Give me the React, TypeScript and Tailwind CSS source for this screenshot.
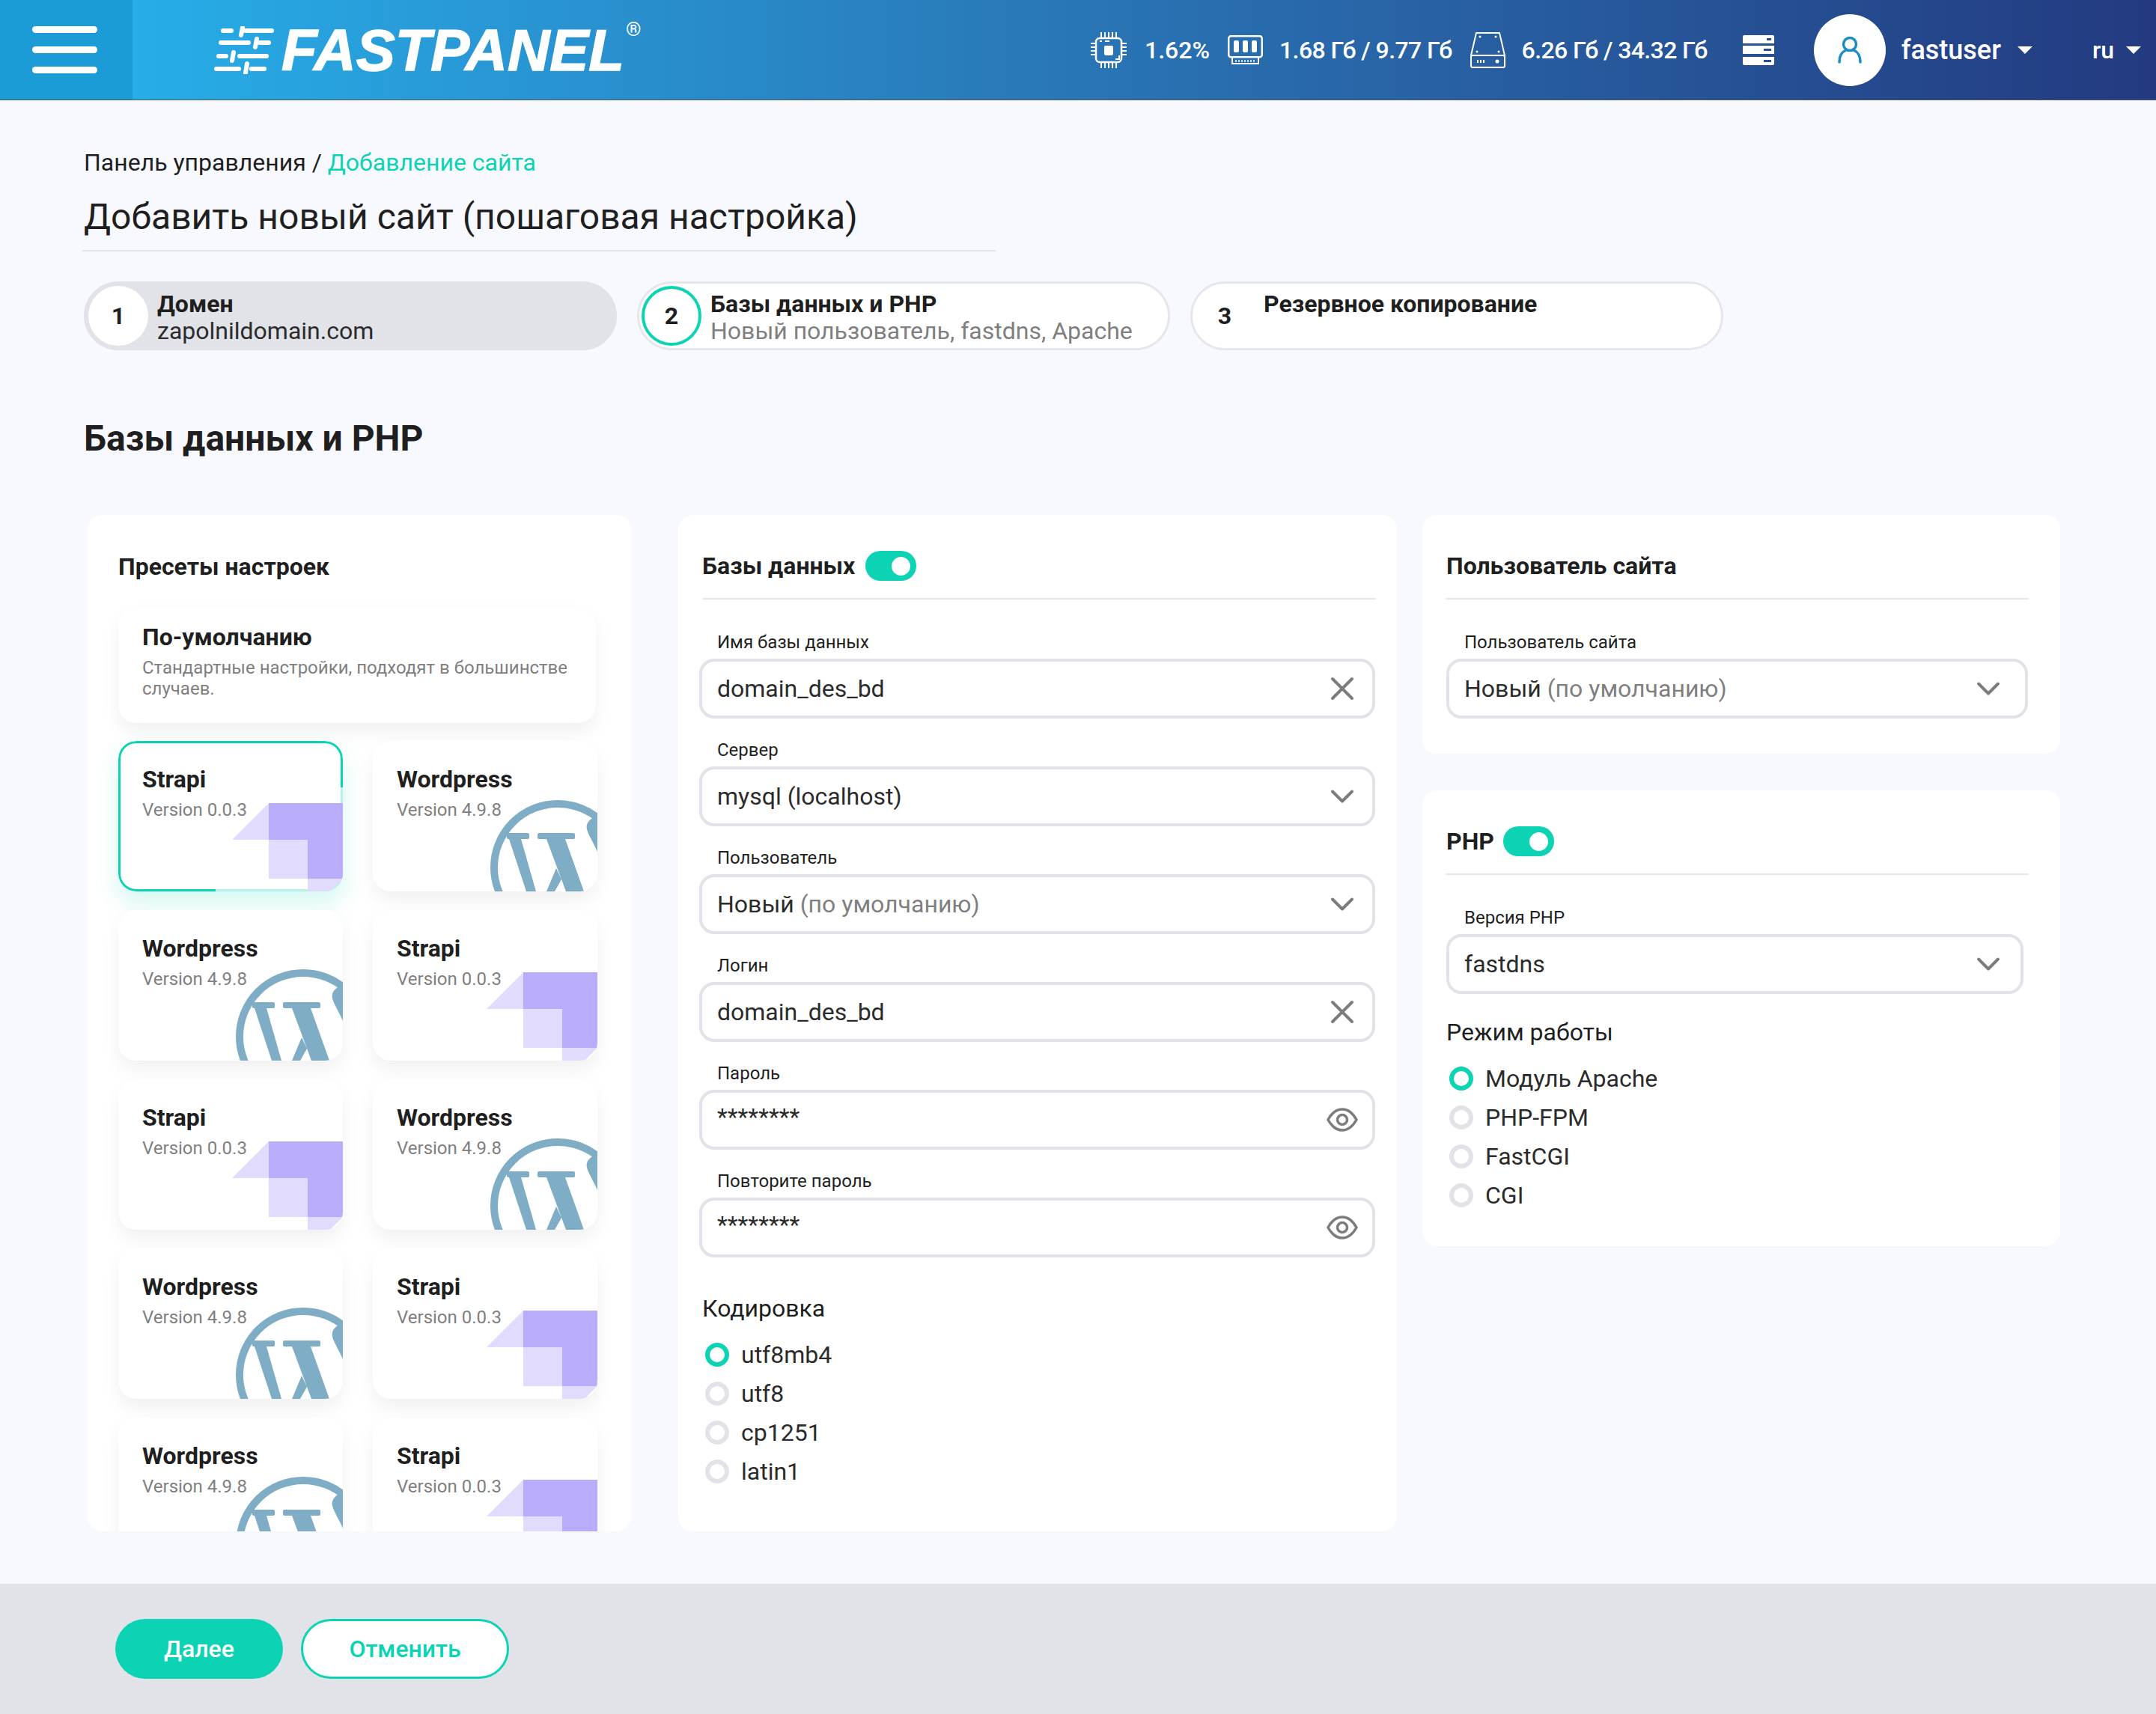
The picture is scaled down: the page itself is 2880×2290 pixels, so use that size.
import React from 'react';
import { ChevronDown, X } from 'lucide-react';

const rows = [
  ['strapi', 'wordpress'],
  ['wordpress', 'strapi'],
  ['strapi', 'wordpress'],
  ['wordpress', 'strapi'],
  ['wordpress', 'strapi'],
];

const LogoMark = () => (
  <svg width="80" height="64" viewBox="0 0 80 64" fill="none" stroke="white" strokeWidth="6" strokeLinecap="round">
    <path d="M12 6h11M42 6h35M38 2l-2 10" />
    <path d="M9 22h37M61 22h12M57 17l-2 11" />
    <path d="M6 40h10M34 40h36M26 35l-2 11" />
    <path d="M3 57h30M50 57h17M44 50l-2 12" />
  </svg>
);

const CpuIcon = () => (
  <svg width="48" height="48" viewBox="0 0 48 48" fill="none" stroke="white" strokeWidth="2">
    <rect x="7" y="8" width="34" height="32" rx="5" strokeWidth="2.5" />
    <rect x="18" y="18" width="12" height="13" rx="2" fill="white" stroke="none" />
    <path d="M12 12h3M19 12h6M33 36h5v-5" />
    <path d="M14 0v7M19 0v7M24 0v7M29 0v7M34 0v7M14 41v7M19 41v7M24 41v7M29 41v7M34 41v7M0 15h6M0 20h6M0 25h6M0 30h6M42 15h6M42 20h6M42 25h6M42 30h6" />
  </svg>
);

const RamIcon = () => (
  <svg width="47" height="39" viewBox="0 0 47 39" fill="none" stroke="white">
    <rect x="1.25" y="1.25" width="44.5" height="28" rx="3" strokeWidth="2.5" />
    <rect x="8" y="7" width="7" height="16" rx="2" fill="white" stroke="none" />
    <rect x="20" y="7" width="7" height="16" rx="2" fill="white" stroke="none" />
    <rect x="32" y="7" width="7" height="16" rx="2" fill="white" stroke="none" />
    <path d="M6 30v8h35v-8" strokeWidth="2" />
    <path d="M11 33v3M15 33v3M19 33v3M23 33v3M27 33v3M31 33v3M35 33v3" strokeWidth="1.5" />
  </svg>
);

const DiskIcon = () => (
  <svg width="47" height="48" viewBox="0 0 47 48" fill="none" stroke="white" strokeWidth="2">
    <path d="M8 1h31l7 30H1z" />
    <rect x="1" y="31" width="45" height="16" rx="2" />
    <path d="M9 39h12" strokeDasharray="2 2" strokeWidth="4" />
    <circle cx="36" cy="39" r="2.5" fill="white" stroke="none" />
    <circle cx="13" cy="6" r="1.5" fill="white" stroke="none" />
    <circle cx="34" cy="6" r="1.5" fill="white" stroke="none" />
    <circle cx="9" cy="26" r="1.5" fill="white" stroke="none" />
    <circle cx="38" cy="26" r="1.5" fill="white" stroke="none" />
  </svg>
);

const ServerIcon = () => (
  <svg width="42" height="40" viewBox="0 0 42 40" fill="white">
    <path fillRule="evenodd" d="M2 0h38a2 2 0 0 1 2 2v9H0V2a2 2 0 0 1 2-2zm30 4v3h6V4zM0 14h42v11H0zm28 4v3h10v-3zM0 29h42v9a2 2 0 0 1-2 2H2a2 2 0 0 1-2-2zm28 4v3h10v-3z" />
  </svg>
);

const UserIcon = () => (
  <svg width="36" height="37" viewBox="0 0 36 37" fill="none" stroke="#1b8cc4" strokeWidth="3.5" strokeLinecap="round">
    <circle cx="18" cy="11" r="8.5" />
    <path d="M4 35c0-9 4-14 9-16M32 35c0-9-4-14-9-16" />
  </svg>
);

const EyeIcon = () => (
  <svg className="shrink-0" width="42" height="32" viewBox="0 0 42 32" fill="none" stroke="#7c7c7c" strokeWidth="3.5">
    <path d="M2 16C7 7 13 2 21 2s14 5 19 14c-5 9-11 14-19 14S7 25 2 16z" />
    <circle cx="21" cy="16" r="6.5" />
  </svg>
);

const Chevron = () => <ChevronDown className="shrink-0" size={52} strokeWidth={1.8} />;
const Cross = () => <X className="shrink-0" size={52} strokeWidth={1.8} />;

const Caret = () => <div className="w-0 h-0 border-x-[10px] border-x-transparent border-t-[10px] border-t-white" />;

const Toggle = () => (
  <div className="w-[68px] h-[40px] rounded-full bg-[#0bd3b3] flex items-center justify-end pr-[8px]">
    <div className="w-[25px] h-[25px] rounded-full bg-white" />
  </div>
);

const Radio = ({ label, checked }: { label: string; checked?: boolean }) => (
  <div className="flex items-center h-[52px] gap-[16px]">
    <div className={`w-[32px] h-[32px] rounded-full border-[6px] bg-white ${checked ? 'border-[#0bd3b3]' : 'border-[#e2e3e8]'}`} />
    <span className="text-[32px] text-[#2b2b2b]">{label}</span>
  </div>
);

const Field = ({ label, children, icon, className = 'w-[903px] pr-[20px]' }: { label: string; children: React.ReactNode; icon: React.ReactNode; className?: string }) => (
  <div>
    <div className="h-[28px] leading-[28px] text-[24px] text-[#1f1f1f] pl-[24px]">{label}</div>
    <div className={`mt-[8px] h-[80px] rounded-[20px] border-[4px] border-[#e2e3e8] bg-white flex items-center justify-between pl-[20px] text-[32px] text-[#2b2b2b] ${className}`}>
      <div>{children}</div>
      <div className="w-[40px] flex justify-center text-[#7c7c7c]">{icon}</div>
    </div>
  </div>
);

const WpLogo = () => (
  <svg className="absolute inset-0" width="300" height="201" viewBox="0 0 300 201" fill="#7eadc5">
    <circle cx="247" cy="169" r="85" fill="none" stroke="#7eadc5" strokeWidth="10" />
    <rect x="179" y="123" width="30" height="8" rx="2" />
    <rect x="220" y="123" width="50" height="8" rx="2" />
    <path d="M182 131h16l20 70h-13zM232 131h25l25 70h-24zM245 170l7 15-9 16h-11z" />
    <path d="M300 100c-10 3-16 10-14 18 2 8 10 20 14 30z" />
  </svg>
);

const StrapiLogo = () => (
  <svg className="absolute inset-0" width="300" height="201" viewBox="0 0 300 201">
    <path d="M201 83h99v101h-47v-52h-52z" fill="#b9adfb" />
    <path d="M201 83l-49 49h49zM201 132h52v52h-52zM253 184h47l-17 17h-30z" fill="#e1dcfe" />
  </svg>
);

const PresetCard = ({ kind, selected }: { kind: string; selected?: boolean }) => {
  const strapi = kind === 'strapi';
  return (
    <div className={`relative h-[201px] rounded-[24px] bg-white overflow-hidden ${selected ? 'shadow-[0_16px_32px_rgba(11,211,179,0.18)]' : 'shadow-[0_12px_24px_rgba(0,0,0,0.06)]'}`}>
      {selected && <div className="absolute inset-0 rounded-[24px] border-[3px] border-[#0bd3b3]" />}
      <div className="absolute left-[130px] top-[62px] right-0 bottom-0 bg-white/70" />
      {strapi ? <StrapiLogo /> : <WpLogo />}
      <div className="absolute left-[32px] top-[31px] text-[32px] leading-[40px] font-bold text-[#1f1f1f]">{strapi ? 'Strapi' : 'Wordpress'}</div>
      <div className="absolute left-[32px] top-[77px] text-[24px] leading-[30px] text-[#7f7f7f]">{strapi ? 'Version 0.0.3' : 'Version 4.9.8'}</div>
    </div>
  );
};

const Step = ({ n, title, sub, state }: { n: number; title: string; sub?: string; state: 'done' | 'active' | 'next' }) => (
  <div className={`w-[712px] h-[92px] rounded-full border-[3px] flex items-center pl-[3px] gap-[12px] ${state === 'done' ? 'bg-[#e2e3e8] border-[#e2e3e8]' : 'bg-white border-[#e6e7ec]'}`}>
    <div className={`w-[80px] h-[80px] shrink-0 rounded-full bg-white flex items-center justify-center text-[32px] font-bold text-[#1f1f1f] ${state === 'active' ? 'border-[4px] border-[#0bd3b3]' : ''}`}>{n}</div>
    <div className="self-start pt-[9px] leading-[36px] text-[32px]">
      <div className="font-bold text-[#1f1f1f]">{title}</div>
      {sub && <div className={state === 'done' ? 'text-[#2b2b2b]' : 'text-[#7f7f7f]'}>{sub}</div>}
    </div>
  </div>
);

export default function App() {
  return (
    <div className="min-h-screen w-[2880px] bg-[#f8f9fe] flex flex-col [font-family:Roboto,sans-serif]">
      {/* Шапка */}
      <header className="h-[134px] shrink-0 flex items-center border-b border-[#4d5566] bg-gradient-to-r from-[#25b5ef] to-[#233a80] text-white">
        <div className="w-[177px] h-full bg-[#1b9cd6] flex flex-col justify-center gap-[18px] pl-[43px]">
          <div className="w-[87px] h-[9px] rounded-full bg-white" />
          <div className="w-[87px] h-[9px] rounded-full bg-white" />
          <div className="w-[87px] h-[9px] rounded-full bg-white" />
        </div>
        <div className="ml-[109px] flex items-center">
          <LogoMark />
          <span className="ml-[10px] text-[78px] leading-none font-bold italic [-webkit-text-stroke:1.5px_white] [font-family:'Liberation_Sans',sans-serif]">FASTPANEL</span>
          <span className="self-start text-[26px] leading-none ml-[2px] mt-[-2px]">®</span>
        </div>
        <div className="ml-auto flex items-center text-[32px] font-medium">
          <CpuIcon />
          <span className="ml-[24px]">1.62%</span>
          <div className="ml-[24px]"><RamIcon /></div>
          <span className="ml-[22px] tracking-[-0.6px]">1.68 Гб / 9.77 Гб</span>
          <div className="ml-[24px]"><DiskIcon /></div>
          <span className="ml-[22px] tracking-[-0.6px]">6.26 Гб / 34.32 Гб</span>
          <div className="ml-[47px]"><ServerIcon /></div>
          <div className="ml-[53px] w-[96px] h-[96px] rounded-full bg-white flex items-center justify-center"><UserIcon /></div>
          <span className="ml-[21px] text-[36px]">fastuser</span>
          <div className="ml-[22px]"><Caret /></div>
          <span className="ml-[80px]">ru</span>
          <div className="ml-[16px] mr-[20px]"><Caret /></div>
        </div>
      </header>

      <main className="flex-1 pl-[112px] pt-[63px] pb-[70px]">
        <div className="text-[32px] leading-[40px] text-[#1f1f1f]">
          Панель управления / <span className="text-[#0bd3b3]">Добавление сайта</span>
        </div>
        <h1 className="mt-[23px] text-[48px] leading-[60px] text-[#1f1f1f]">Добавить новый сайт (пошаговая настройка)</h1>
        <div className="mt-[14px] -ml-[2px] w-[1220px] h-[2px] bg-[#e3e4e9]" />

        <div className="mt-[40px] flex gap-[27px]">
          <Step n={1} title="Домен" sub="zapolnildomain.com" state="done" />
          <Step n={2} title="Базы данных и PHP" sub="Новый пользователь, fastdns, Apache" state="active" />
          <Step n={3} title="Резервное копирование" state="next" />
        </div>

        <h2 className="mt-[88px] text-[48px] leading-[60px] font-bold text-[#1f1f1f]">Базы данных и PHP</h2>

        <div className="mt-[72px] ml-[5px] flex items-start">
          {/* Пресеты */}
          <section className="w-[726px] h-[1358px] rounded-[20px] bg-white overflow-hidden pl-[41px] pt-[49px]">
            <div className="h-[40px] leading-[40px] text-[32px] font-bold text-[#1f1f1f]">Пресеты настроек</div>
            <div className="mt-[34px] w-[638px] h-[155px] rounded-[24px] bg-white shadow-[0_12px_24px_rgba(0,0,0,0.06)] pl-[32px] pt-[20px] pr-[20px]">
              <div className="text-[32px] leading-[40px] font-bold text-[#1f1f1f]">По-умолчанию</div>
              <div className="mt-[7px] text-[24px] leading-[28px] text-[#7f7f7f]">Стандартные настройки, подходят в большинстве случаев.</div>
            </div>
            <div className="mt-[24px] grid grid-cols-[300px_300px] gap-x-[40px] gap-y-[25px]">
              {rows.flat().map((kind, i) => (
                <PresetCard key={i} kind={kind} selected={i === 0} />
              ))}
            </div>
          </section>

          {/* Базы данных */}
          <section className="ml-[63px] w-[960px] h-[1358px] rounded-[20px] bg-white px-[28px] pt-[48px]">
            <div className="ml-[4px] h-[40px] flex items-center gap-[14px] text-[32px] font-bold text-[#1f1f1f]">Базы данных <Toggle /></div>
            <div className="ml-[5px] mt-[23px] h-[2px] bg-[#e5e6ea]" />
            <div className="mt-[43px] flex flex-col gap-[28px]">
              <Field label="Имя базы данных" icon={<Cross />}>domain_des_bd</Field>
              <Field label="Сервер" icon={<Chevron />}>mysql (localhost)</Field>
              <Field label="Пользователь" icon={<Chevron />}>Новый <span className="text-[#7f7f7f]">(по умолчанию)</span></Field>
              <Field label="Логин" icon={<Cross />}>domain_des_bd</Field>
              <Field label="Пароль" icon={<EyeIcon />}><span className="relative -top-[4px]">********</span></Field>
              <Field label="Повторите пароль" icon={<EyeIcon />}><span className="relative -top-[4px]">********</span></Field>
            </div>
            <div className="ml-[4px] mt-[48px] h-[40px] leading-[40px] text-[32px] text-[#1f1f1f]">Кодировка</div>
            <div className="ml-[8px] mt-[16px]">
              <Radio label="utf8mb4" checked />
              <Radio label="utf8" />
              <Radio label="cp1251" />
              <Radio label="latin1" />
            </div>
          </section>

          <div className="ml-[34px] w-[852px] flex flex-col gap-[49px]">
            <section className="h-[319px] rounded-[20px] bg-white pl-[32px] pr-[42px] pt-[48px]">
              <div className="h-[40px] leading-[40px] text-[32px] font-bold text-[#1f1f1f]">Пользователь сайта</div>
              <div className="mt-[23px] h-[2px] bg-[#e5e6ea]" />
              <div className="mt-[43px]">
                <Field label="Пользователь сайта" className="w-[777px] pr-[29px]" icon={<Chevron />}>Новый <span className="text-[#7f7f7f]">(по умолчанию)</span></Field>
              </div>
            </section>
            <section className="rounded-[20px] bg-white pl-[32px] pr-[42px] pt-[48px] pb-[42px]">
              <div className="h-[40px] flex items-center gap-[12px] text-[32px] font-bold text-[#1f1f1f]">PHP <Toggle /></div>
              <div className="mt-[23px] h-[2px] bg-[#e5e6ea]" />
              <div className="mt-[43px]">
                <Field label="Версия PHP" className="w-[771px] pr-[23px]" icon={<Chevron />}>fastdns</Field>
              </div>
              <div className="mt-[31px] h-[40px] leading-[40px] text-[32px] text-[#1f1f1f]">Режим работы</div>
              <div className="ml-[4px] mt-[16px]">
                <Radio label="Модуль Apache" checked />
                <Radio label="PHP-FPM" />
                <Radio label="FastCGI" />
                <Radio label="CGI" />
              </div>
            </section>
          </div>
        </div>
      </main>

      <footer className="h-[174px] shrink-0 bg-[#e2e3e8] flex items-center pl-[154px] gap-[24px]">
        <button className="w-[224px] h-[80px] rounded-full bg-[#0bd3b3] text-white text-[32px] font-medium">Далее</button>
        <button className="w-[278px] h-[80px] rounded-full bg-white border-[3px] border-[#0bd3b3] text-[#0bd3b3] text-[32px] font-medium">Отменить</button>
      </footer>
    </div>
  );
}
